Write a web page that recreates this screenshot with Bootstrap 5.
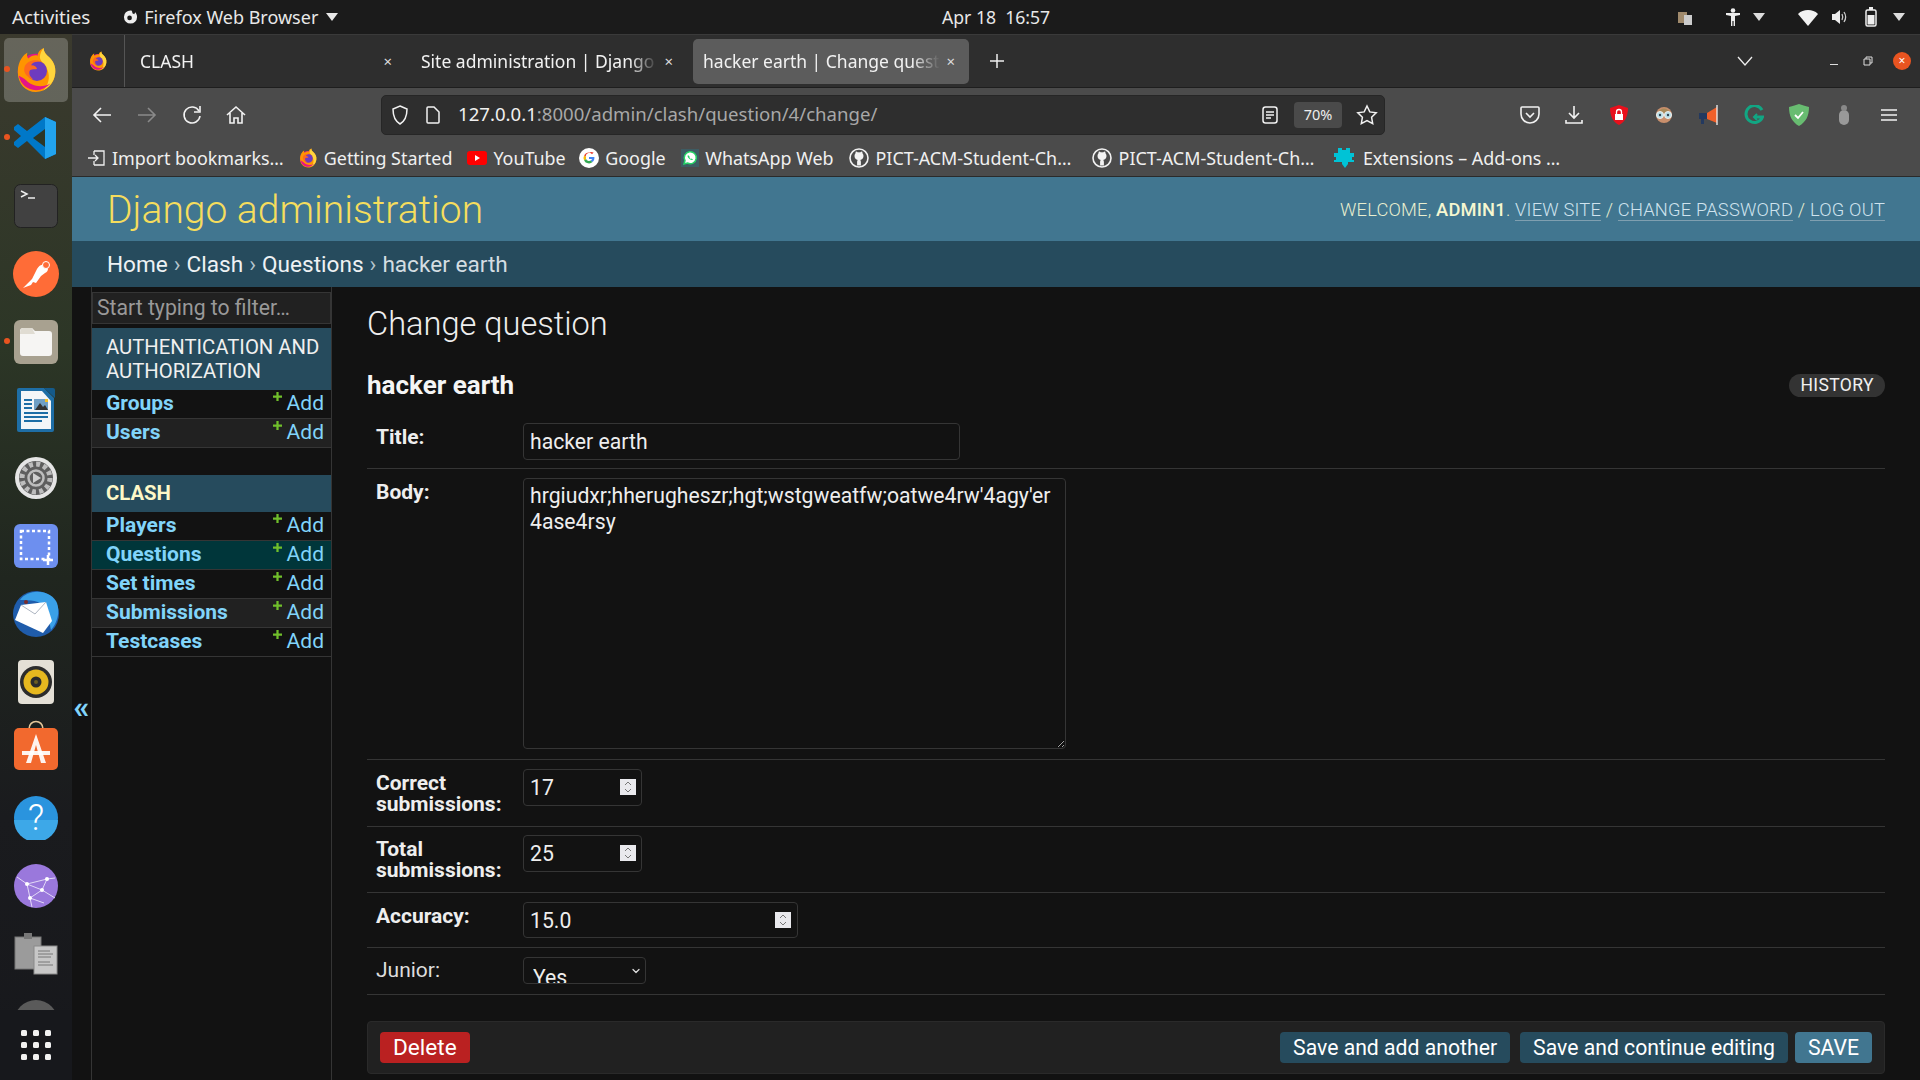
<!DOCTYPE html>
<html lang="en">
<head>
    <meta charset="UTF-8">
    <meta name="viewport" content="width=device-width, initial-scale=1.0">
    <title>hacker earth | Change question</title>
    <link href="https://cdn.jsdelivr.net/npm/bootstrap@5.3.0/dist/css/bootstrap.min.css" rel="stylesheet">
    <style>
        body { background: #121212; font-family: "Noto Sans", sans-serif; height: 1080px; overflow: hidden; }

        /* Ubuntu top bar */
        .top-bar { height: 34px; background: #1b1b1b; color: #e8e8e8; font-size: 18px; padding: 0 12px; flex: none; }
        .top-item { margin-right: 33px; font-size: 18.8px; }
        .top-clock { position: absolute; left: 942px; top: 4px; font-size: 17.6px; }
        .tray svg { display: block; }

        /* Dock */
        .dock { width: 72px; flex: none; background: linear-gradient(180deg, #3b3a2e 0%, #2c3626 30%, #20261f 52%, #1a1b1e 75%, #17181c 100%); position: relative; overflow: hidden; }
        .dock-item { height: 68px; width: 72px; flex: none; position: relative; padding-top: 3px; }
        .dock-first { background: rgba(255,255,255,.22); border-radius: 5px; width: 64px; height: 64px; position: absolute; left: 4px; top: 4px; }
        .dock-dot { position: absolute; left: 4px; top: 32px; width: 6px; height: 6px; border-radius: 50%; background: #e95420; z-index: 1; }
        .dock-grid { position: absolute; left: 0; right: 0; bottom: 0; height: 70px; background: #17181c; }

        /* Firefox */
        .tab-strip { height: 54px; background: #2e2e2e; color: #f2f2f2; font-size: 17.5px; border-top: 1px solid #3a3a3a; border-bottom: 1px solid #1e1e1e; flex: none; }
        .pin-tab { width: 53px; height: 52px; flex: none; border-right: 1px solid #555; }
        .ff-tab { height: 45px; flex: none; padding: 0 14px 0 15px; }
        .ff-tab.is-active { background: #5c5c5c; border-radius: 5px; padding-left: 10px; }
        .tab-label { white-space: nowrap; flex: 1; min-width: 0; -webkit-mask-image: linear-gradient(90deg, #000 88%, transparent 100%); mask-image: linear-gradient(90deg, #000 88%, transparent 100%); }
        .tab-x { font-size: 15px; color: #ddd; margin-left: 6px; }
        .tool-bar { height: 53px; background: #4b4b4b; flex: none; }
        .url-bar { width: 1004px; height: 40px; flex: none; background: #2e2e2e; border-radius: 5px; border: 1px solid #262626; margin-left: 135px; font-size: 18.6px; color: #a8a8a8; }
        .url-host { color: #f0f0f0; }
        .zoom-pill { background: #4a4a4a; border-radius: 4px; width: 48px; height: 26px; font-size: 14.5px; color: #eee; }
        .bookmarks { height: 36px; background: #4b4b4b; border-bottom: 1px solid #2a2a2a; color: #f0f0f0; font-size: 17.9px; padding-left: 16px; flex: none; }
        .mark-item { white-space: nowrap; flex: none; }

        /* Django admin */
        .dj-page { font-family: Roboto, sans-serif; color: #eee; background: #121212; }
        .dj-head { height: 64px; background: #417690; padding: 2px 35px 0; flex: none; }
        .dj-brand { font-size: 39px; font-weight: 300; color: #f5dd5d; line-height: 1; }
        .dj-tools { font-size: 18.3px; font-weight: 300; color: #e8eecf; text-transform: uppercase; letter-spacing: .2px; }
        .dj-tools a { color: #cfe3ee; text-decoration: none; border-bottom: 1px solid #7f9fb0; }
        .dj-tools strong { font-weight: 500; color: #f5f7d0; }
        .dj-crumbs { height: 46px; background: #264b5d; padding: 2px 35px 0; font-size: 22.6px; color: #d4dde2; flex: none; }
        .dj-crumbs .breadcrumb-item + .breadcrumb-item { padding-left: 6px; }
        .dj-crumbs .breadcrumb-item + .breadcrumb-item::before { content: "›"; color: #b5c5cd; padding-right: 6px; }
        .dj-crumbs a { color: #eef2f4; text-decoration: none; }
        .dj-crumbs .breadcrumb-item.active { color: #d4dde2; }
        .dj-toggle { width: 20px; flex: none; border-right: 1px solid #353535; color: #81d4fa; font-size: 32px; font-weight: 700; padding-top: 46px; }
        .dj-side { width: 240px; flex: none; border-right: 1px solid #353535; padding-top: 5px; }
        .side-filter { height: 32px; width: 239px; background: #212121; border: 1px solid #353535; color: #eee; font-size: 21.2px; padding: 0 4px 2px; border-radius: 0; margin-bottom: 4px; display: block; }
        .side-filter::placeholder { color: #999; opacity: 1; }
        .side-cap { background: #264b5d; color: #f0f0ef; font-size: 20.3px; line-height: 23.5px; padding: 8px 4px 7px 14px; }
        .side-cap.is-current { color: #fdf8c8; font-weight: 700; padding: 7px 14px 6px; }
        .side-row { height: 29px; padding: 0 7px 0 14px; border-bottom: 1px solid #353535; font-size: 21px; line-height: 27px; color: #81d4fa; }
        .side-row.is-alt { background: #212121; }
        .side-row.is-here { background: #00363a; }
        .side-name { font-weight: 700; }
        .side-add svg { vertical-align: 9px; margin-right: 5px; }
        .dj-main { padding: 0 35px 0 35px; flex: 1; min-width: 0; }
        .dj-title { font-size: 32.6px; font-weight: 300; color: #eee; line-height: 32px; margin: 21px 0 27px; }
        .dj-sub { height: 36px; margin-bottom: 10px; }
        .dj-sub h2 { font-size: 26px; font-weight: 700; color: #f5f5f5; margin: 1px 0 0; }
        .hist-pill { background: #333; border-radius: 13px; height: 23px; padding: 0 11px; font-size: 17.5px; color: #f0f0f0; letter-spacing: .4px; }
        .form-line { border-bottom: 1px solid #353535; padding: 9px 9px 11px; }
        .line-label { width: 147px; flex: none; font-size: 21px; line-height: 21px; font-weight: 700; color: #eee; padding-top: 4px; margin: 0; }
        .line-label.is-plain { font-weight: 400; color: #ddd; padding-top: 3px; }
        .dj-input { background-color: #121212 !important; color: #eee !important; border: 1px solid #353535; border-radius: 4px; font-size: 21.2px; line-height: 26px; padding: 4px 6px; box-shadow: none; }
        .in-title { width: 437px; height: 37px; }
        .in-body { width: 543px; height: 271px; display: block; }
        .in-count { width: 119px; height: 37px; }
        .in-acc { width: 275px; height: 36px; }
        .in-acc + .spin-box { right: 7px; }
        .in-junior { width: 123px; height: 27px; padding: 7px 0 0 9px; background-size: 10px 8px; background-position: right 4px top 9px; overflow: hidden; line-height: 26px; --bs-form-select-bg-img: url("data:image/svg+xml,%3csvg xmlns='http://www.w3.org/2000/svg' viewBox='0 0 16 16'%3e%3cpath fill='none' stroke='%23ddd' stroke-linecap='round' stroke-linejoin='round' stroke-width='2.5' d='m2 5 6 6 6-6'/%3e%3c/svg%3e"); }
        .spin-wrap { position: relative; }
        .spin-box { position: absolute; right: 6px; top: 10px; width: 16px; height: 16px; background: #e9e9ed; }
        .spin-box svg { display: block; }
        .submit-line { background: #212121; height: 53px; margin-top: 26px; padding: 0 12px; border: 1px solid #2a2a2a; border-radius: 4px; }
        .dj-btn { height: 31px; font-size: 21.2px; line-height: 1; padding: 0 13px; border: none; border-radius: 4px; color: #fff; background: #264b5d; }
        .dj-btn:hover { color: #fff; background: #264b5d; }
        .dj-btn.is-delete { background: #ba2121; font-size: 22.6px; padding-top: 2px; }
        .dj-btn.is-save { background: #417690; }
    </style>
</head>
<body class="d-flex flex-column">

<svg width="0" height="0" class="position-absolute">
    <defs>
        <symbol id="i-fox" viewBox="0 0 48 48">
            <circle cx="24" cy="26" r="19" fill="#e31587"/>
            <path d="M5 26C5 14 12 7 15 6c-1 3 0 5 1 6 3-3 7-4 10-3 0 0-1-5 6-8 0 3 1 5 4 8 6 5 9 11 8 19-1 10-9 19-20 19S5 38 5 26Z" fill="#ff9500"/>
            <path d="M32 1c0 3 1 5 4 8 6 5 9 11 8 19-1 8-6 14-12 17 5-6 7-13 4-21-2-6-7-8-8-13 0-4 2-8 4-10Z" fill="#ffd53d"/>
            <path d="M6 30c2 9 9 15 18 15 6 0 11-3 15-7-8 5-20 3-25-3-3-3-6-4-8-5Z" fill="#e31587"/>
            <circle cx="25" cy="25" r="10.5" fill="#6e3bbf"/>
            <path d="M12 21c2-6 10-9 17-6-5 0-9 1-10 4 4 0 6 2 6 4-3 1-8-1-8 4 0 3 3 6 5 7-6-1-12-7-10-13Z" fill="#ff6a1f"/>
        </symbol>
        <symbol id="i-hub" viewBox="0 0 20 20">
            <circle cx="10" cy="10" r="9" fill="none" stroke="#f2f2f2" stroke-width="1.6"/>
            <path d="M5.5 8c0-1 .3-2 1-2.700 0-.8.2-1.300.4-1.700.8 0 1.500.4 2.100.8.700-.1 1.300-.1 2 0 .6-.4 1.300-.8 2.100-.8.2.4.4.9.4 1.700.7.700 1 1.700 1 2.700 0 2.500-1.500 3.600-3.300 3.900.5.500.7 1.100.7 2v3.600H8.100V14c0-.9.200-1.500.7-2C7 11.600 5.500 10.500 5.500 8Z" fill="#f2f2f2"/>
        </symbol>
        <symbol id="i-add" viewBox="0 0 12 12"><path d="M6 0v12M0 6h12" stroke="#70bf2b" stroke-width="3"/></symbol>
        <symbol id="i-spin" viewBox="0 0 16 16"><path d="M5 6l3-3 3 3M5 10l3 3 3-3" fill="none" stroke="#777" stroke-width="1"/></symbol>
    </defs>
</svg>

<!-- Top bar -->
<div class="top-bar d-flex align-items-center position-relative">
    <span class="top-item">Activities</span>
    <span class="d-flex align-items-center">
        <svg width="15" height="16" viewBox="0 0 16 16" style="margin-right:6px"><path d="M8 1a7 7 0 1 0 7 7c0-2-1-4-2-5l-1 2-2-1c0-1 0-2-1-3Z" fill="#eee"/><circle cx="7" cy="9" r="2.500" fill="#1b1b1b"/></svg>
        <span>Firefox Web Browser</span>
        <svg width="12" height="8" viewBox="0 0 12 8" class="ms-2"><path d="M0 0h12L6 8Z" fill="#e8e8e8"/></svg>
    </span>
    <span class="top-clock">Apr 18&nbsp;&nbsp;16:57</span>
    <div class="tray d-flex align-items-center ms-auto">
        <svg width="14" height="16" viewBox="0 0 14 16" style="margin-right:33px"><rect x="0" y="3" width="9" height="11" fill="#a08a6c"/><rect x="6" y="6" width="8" height="10" fill="#ccc"/></svg>
        <svg width="16" height="18" viewBox="0 0 16 18" style="margin-right:12px"><circle cx="8" cy="2.500" r="2.300" fill="#eee"/><path d="M1 5h14v2l-5 1v10H8.600v-5H7.400v5H6V8L1 7Z" fill="#eee"/></svg>
        <svg width="12" height="8" viewBox="0 0 12 8" style="margin-right:33px"><path d="M0 0h12L6 8Z" fill="#ddd"/></svg>
        <svg width="20" height="17" viewBox="0 0 20 17" style="margin-right:13px"><path d="M0 5C3 2 6 1 10 1s7 1 10 4L10 17Z" fill="#f2f2f2"/></svg>
        <svg width="18" height="18" viewBox="0 0 18 18" style="margin-right:16px"><path d="M1 6h3l5-4v14l-5-4H1Z" fill="#eee"/><path d="M11 6c1 2 1 4 0 6M13 4c2 3 2 7 0 10" stroke="#ccc" stroke-width="1.300" fill="none"/></svg>
        <svg width="12" height="20" viewBox="0 0 12 20" style="margin-right:16px"><rect x="1" y="3" width="10" height="16" rx="1.500" fill="none" stroke="#eee" stroke-width="1.500"/><rect x="4" y="0" width="4" height="3" fill="#eee"/><rect x="2.500" y="8" width="7" height="9.500" fill="#eee"/></svg>
        <svg width="12" height="8" viewBox="0 0 12 8" style="margin-right:3px"><path d="M0 0h12L6 8Z" fill="#ddd"/></svg>
    </div>
</div>

<div class="d-flex flex-grow-1" style="min-height:0">

    <!-- Dock -->
    <aside class="dock d-flex flex-column">
        <div class="dock-item d-flex justify-content-center align-items-center">
            <span class="dock-first"></span><span class="dock-dot"></span>
            <svg class="position-relative" width="46" height="48"><use href="#i-fox"/></svg>
        </div>
        <div class="dock-item d-flex justify-content-center align-items-center">
            <span class="dock-dot"></span>
            <svg width="44" height="44" viewBox="0 0 44 44"><path d="M31 1 42 6v32l-11 5-18-18-9 7-4-3v-3l7-6-7-6v-3l4-3 9 7Z" fill="#0078c8"/><path d="M31 1 42 6v32l-11 5Z" fill="#22a3ee"/><path d="M31 13v18L19 22Z" fill="#2c3626"/></svg>
        </div>
        <div class="dock-item d-flex justify-content-center align-items-center">
            <svg width="44" height="44" viewBox="0 0 44 44"><rect x=".5" y=".5" width="43" height="43" rx="6" fill="#414141" stroke="#222"/><path d="M7 7l6 3-6 3" fill="none" stroke="#eee" stroke-width="1.500"/><path d="M14 14h7" stroke="#eee" stroke-width="1.500"/></svg>
        </div>
        <div class="dock-item d-flex justify-content-center align-items-center">
            <svg width="46" height="46" viewBox="0 0 46 46"><circle cx="23" cy="23" r="23" fill="#ff6c37"/><path d="M10 37l9-9 5-10c2-4 5-5 8-4l3 3c0 3-1 4-3 5l-4 3-5 7-3-1-2 3-8 3Z" fill="#fff"/><circle cx="33" cy="14" r="3.500" fill="#ff6c37" stroke="#fff"/></svg>
        </div>
        <div class="dock-item d-flex justify-content-center align-items-center">
            <span class="dock-dot"></span>
            <svg width="44" height="44" viewBox="0 0 44 44"><rect width="44" height="44" rx="6" fill="#a8a190"/><path d="M6 11q0-3 3-3h9l3 3h14q3 0 3 3v19q0 3-3 3H9q-3 0-3-3Z" fill="#f6f5f3"/><path d="M6 14q0-6 3-6h9l3 6Z" fill="#e0dcd2"/></svg>
        </div>
        <div class="dock-item d-flex justify-content-center align-items-center">
            <svg width="38" height="44" viewBox="0 0 38 44"><path d="M2 0h25l10 10v32q0 2-2 2H2q-2 0-2-2V2q0-2 2-2Z" fill="#1e6ea6"/><path d="M4 3h21l9 10v28H4Z" fill="#f4f6f8"/><path d="M27 0h9q2 0 2 2v8Z" fill="#155a8a"/><path d="M7 12h8M7 16h8M7 20h8M7 25h24M7 29h24M7 33h18" stroke="#1e6ea6" stroke-width="2"/><rect x="17" y="11" width="14" height="11" fill="#6f9fc5"/><path d="M18 22l5-7 3 4 2-2 3 5Z" fill="#333"/><rect x="28" y="11" width="3" height="3" fill="#f3c02a"/></svg>
        </div>
        <div class="dock-item d-flex justify-content-center align-items-center">
            <svg width="44" height="44" viewBox="0 0 44 44"><circle cx="22" cy="22" r="21" fill="#e5e5e5"/><circle cx="22" cy="22" r="17" fill="#5e5e5e"/><circle cx="22" cy="22" r="14" fill="none" stroke="#bdbdbd" stroke-width="5" stroke-dasharray="4 3.300"/><circle cx="22" cy="22" r="7.500" fill="#5e5e5e" stroke="#bdbdbd" stroke-width="2.500"/><path d="M19 17l8 5-8 5Z" fill="#cfcfcf"/></svg>
        </div>
        <div class="dock-item d-flex justify-content-center align-items-center">
            <svg width="44" height="44" viewBox="0 0 44 44"><rect width="44" height="44" rx="6" fill="#6d8fef"/><rect x="7" y="7" width="28" height="28" fill="none" stroke="#fff" stroke-width="2.500" stroke-dasharray="3 2.500"/><path d="M34 31v10M29 36h10" stroke="#fff" stroke-width="2.500"/></svg>
        </div>
        <div class="dock-item d-flex justify-content-center align-items-center">
            <svg width="48" height="46" viewBox="0 0 48 46"><circle cx="24" cy="23" r="23" fill="#1f5cab"/><path d="M8 9C16-2 36-2 44 10c4 7 3 20-5 29-2-7-1-15-5-22C28 9 18 9 8 9Z" fill="#3aa0e8"/><path d="M9 14 34 11l6 19-9 12-28-13Z" fill="#fff"/><path d="M9 14l14 9 11-12" fill="none" stroke="#aeb6c2" stroke-width="1"/><circle cx="14" cy="11" r="2" fill="#7a2c2c"/></svg>
        </div>
        <div class="dock-item d-flex justify-content-center align-items-center">
            <svg width="38" height="44" viewBox="0 0 38 44"><rect width="36" height="44" rx="4" x="1" fill="#e4e0d6"/><circle cx="19" cy="22" r="16" fill="#2c2c2c"/><circle cx="19" cy="22" r="12.500" fill="#e6b81f"/><circle cx="19" cy="22" r="5.500" fill="#2b2b2b"/><circle cx="19" cy="22" r="2" fill="#6b5d22"/></svg>
        </div>
        <div class="dock-item d-flex justify-content-center align-items-center">
            <svg width="44" height="50" viewBox="0 0 44 50" style="margin-bottom:10px"><path d="M15 9c0-10 14-10 14 0" fill="none" stroke="#e6c79a" stroke-width="1.600"/><rect y="8" width="44" height="42" rx="5" fill="#f2692e"/><path d="M22 14 12 43h5l5-18 5 18h5Z" fill="#fff" opacity=".92"/><path d="M8 31h28v4H8Z" fill="#fff" opacity=".92"/></svg>
        </div>
        <div class="dock-item d-flex justify-content-center align-items-center position-relative">
            <svg width="44" height="44" viewBox="0 0 44 44"><circle cx="22" cy="22" r="22" fill="#2a94de"/><path d="M0 24a22 22 0 0 0 44 0Z" fill="#3da8e8"/></svg>
            <span class="position-absolute text-white" style="font-family:Roboto,sans-serif;font-weight:300;font-size:36px;line-height:44px">?</span>
        </div>
        <div class="dock-item d-flex justify-content-center align-items-center">
            <svg width="44" height="44" viewBox="0 0 44 44"><circle cx="22" cy="22" r="22" fill="#9a78dc"/><path d="M3 13l10 7 20-5 8-1M13 20l3 14 2 9M33 15l-5 11-12 8M13 20l15 6 13 8M16 34l14 5" fill="none" stroke="#e2d9f7" stroke-width="1"/><circle cx="13" cy="20" r="2" fill="#fff"/><circle cx="33" cy="15" r="2" fill="#fff"/><circle cx="28" cy="26" r="2" fill="#fff"/><circle cx="16" cy="34" r="2" fill="#fff"/></svg>
        </div>
        <div class="dock-item d-flex justify-content-center align-items-center">
            <svg width="44" height="44" viewBox="0 0 44 44"><rect x="1" y="5" width="26" height="32" fill="#9b9b9b" stroke="#777"/><rect x="10" y="1" width="8" height="6" fill="#777"/><rect x="20" y="14" width="23" height="28" fill="#c7c7c7" stroke="#8a8a8a"/><path d="M24 19h12M24 22h15M24 25h13M24 30h12M24 33h15" stroke="#777"/></svg>
        </div>
        <div class="dock-item d-flex justify-content-center align-items-center">
            <svg width="44" height="44" viewBox="0 0 44 44"><circle cx="22" cy="22" r="22" fill="#5a5a5a"/></svg>
        </div>
        <div class="dock-grid d-flex align-items-center justify-content-center">
            <svg width="30" height="30" viewBox="0 0 30 30" fill="#f2f2f2"><rect width="6" height="6" rx="1.500"/><rect x="12" width="6" height="6" rx="1.500"/><rect x="24" width="6" height="6" rx="1.500"/><rect y="12" width="6" height="6" rx="1.500"/><rect x="12" y="12" width="6" height="6" rx="1.500"/><rect x="24" y="12" width="6" height="6" rx="1.500"/><rect y="24" width="6" height="6" rx="1.500"/><rect x="12" y="24" width="6" height="6" rx="1.500"/><rect x="24" y="24" width="6" height="6" rx="1.500"/></svg>
        </div>
    </aside>

    <!-- Browser window -->
    <div class="d-flex flex-column flex-grow-1" style="min-width:0">
        <div class="tab-strip d-flex align-items-center">
            <div class="pin-tab d-flex align-items-center justify-content-center">
                <svg width="20" height="20"><use href="#i-fox"/></svg>
            </div>
            <div class="ff-tab d-flex align-items-center" style="width:281px"><span class="tab-label">CLASH</span><span class="tab-x">×</span></div>
            <div class="ff-tab d-flex align-items-center" style="width:281px"><span class="tab-label">Site administration | Django s</span><span class="tab-x">×</span></div>
            <div class="ff-tab is-active d-flex align-items-center" style="width:276px;margin-left:6px"><span class="tab-label">hacker earth | Change questi</span><span class="tab-x">×</span></div>
            <svg width="16" height="16" viewBox="0 0 16 16" style="margin-left:20px;flex:none"><path d="M8 1v14M1 8h14" stroke="#eee" stroke-width="1.500"/></svg>
            <svg width="16" height="10" viewBox="0 0 16 10" style="margin-left:732px;flex:none"><path d="M1 1l7 8 7-8" fill="none" stroke="#eee" stroke-width="1.300"/></svg>
            <span style="width:8px;height:1px;background:#ddd;margin-left:77px;margin-top:6px;flex:none"></span>
            <svg width="10" height="10" viewBox="0 0 10 10" style="margin-left:25px;flex:none"><path d="M3 3V1h6v6H7M1 3h6v6H1Z" fill="none" stroke="#ddd"/></svg>
            <span class="d-flex align-items-center justify-content-center text-white" style="width:18px;height:18px;border-radius:50%;background:#e95420;margin-left:20px;font-size:12px;flex:none">×</span>
        </div>

        <div class="tool-bar d-flex align-items-center">
            <svg width="20" height="18" viewBox="0 0 20 18" style="margin-left:20px"><path d="M19 9H2M9 2 2 9l7 7" fill="none" stroke="#f2f2f2" stroke-width="1.600"/></svg>
            <svg width="20" height="18" viewBox="0 0 20 18" style="margin-left:25px"><path d="M1 9h17M11 2l7 7-7 7" fill="none" stroke="#8a8a8a" stroke-width="1.600"/></svg>
            <svg width="20" height="20" viewBox="0 0 20 20" style="margin-left:25px"><path d="M17 6a8 8 0 1 0 1 5" fill="none" stroke="#f2f2f2" stroke-width="1.600"/><path d="M18 1v6h-6" fill="none" stroke="#f2f2f2" stroke-width="1.600"/></svg>
            <svg width="20" height="20" viewBox="0 0 20 20" style="margin-left:24px"><path d="M1 10l9-8 9 8M4 8v10h4v-5h4v5h4V8" fill="none" stroke="#f2f2f2" stroke-width="1.600"/></svg>
            <div class="url-bar d-flex align-items-center">
                <svg width="18" height="20" viewBox="0 0 18 20" style="margin-left:9px"><path d="M9 1l7 3c0 7-2 12-7 15C4 16 2 11 2 4Z" fill="none" stroke="#f2f2f2" stroke-width="1.500"/></svg>
                <svg width="14" height="18" viewBox="0 0 14 18" style="margin-left:17px"><path d="M1 2q0-1 1-1h6l5 5v10q0 1-1 1H2q-1 0-1-1Z" fill="none" stroke="#f2f2f2" stroke-width="1.500"/></svg>
                <span style="margin-left:18px;padding-bottom:2px"><span class="url-host">127.0.0.1</span>:8000/admin/clash/question/4/change/</span>
                <svg class="ms-auto" width="16" height="18" viewBox="0 0 16 18"><rect x="1" y="1" width="14" height="16" rx="2.500" fill="none" stroke="#f2f2f2" stroke-width="1.500"/><path d="M4 6h8M4 9h8M4 12h5" stroke="#f2f2f2" stroke-width="1.300"/></svg>
                <span class="zoom-pill d-flex align-items-center justify-content-center" style="margin-left:16px">70%</span>
                <svg width="22" height="22" viewBox="0 0 22 22" style="margin:0 6px 0 14px"><path d="M11 2l2.800 5.900 6.400.9-4.600 4.500 1.100 6.400-5.700-3-5.700 3 1.100-6.400L1.800 8.800l6.400-.9Z" fill="none" stroke="#f2f2f2" stroke-width="1.500"/></svg>
            </div>
            <svg width="20" height="18" viewBox="0 0 20 18" style="margin-left:135px"><path d="M2 1h16q1 0 1 1v6a9 9 0 0 1-18 0V2q0-1 1-1Z" fill="none" stroke="#f2f2f2" stroke-width="1.600"/><path d="M6 7l4 4 4-4" fill="none" stroke="#f2f2f2" stroke-width="1.600"/></svg>
            <svg width="18" height="20" viewBox="0 0 18 20" style="margin-left:25px"><path d="M9 1v12M4 8l5 5 5-5M1 15v3h16v-3" fill="none" stroke="#f2f2f2" stroke-width="1.600"/></svg>
            <svg width="18" height="20" viewBox="0 0 18 20" style="margin-left:27px"><path d="M9 0l9 3c0 8-3 14-9 17C3 17 0 11 0 3Z" fill="#e8101c"/><rect x="5" y="9" width="8" height="6" fill="#fff"/><path d="M6.500 9V7a2.500 2.500 0 0 1 5 0v2" fill="none" stroke="#fff" stroke-width="1.300"/></svg>
            <svg width="20" height="20" viewBox="0 0 20 20" style="margin-left:26px"><circle cx="10" cy="10" r="8" fill="#c98f6c"/><path d="M3 8q7-9 14 0Z" fill="#a88a5a"/><circle cx="6" cy="10" r="3.500" fill="#b9dfe6" stroke="#eee"/><circle cx="14" cy="10" r="3.500" fill="#b9dfe6" stroke="#eee"/><circle cx="6" cy="10" r="1.200" fill="#345"/><circle cx="14" cy="10" r="1.200" fill="#345"/></svg>
            <svg width="20" height="20" viewBox="0 0 20 20" style="margin-left:25px"><path d="M0 8h8v6H5v5H2v-5H0Z" fill="#23395f"/><path d="M8 8l10-6v16L8 14Z" fill="#f0602a"/><path d="M18 0v20" stroke="#f2f2f2" stroke-width="1.300"/></svg>
            <svg width="20" height="20" viewBox="0 0 20 20" style="margin-left:25px"><path d="M18 5A8.500 8.500 0 1 0 18.500 12H11" fill="none" stroke="#11a683" stroke-width="3"/><path d="M13 9l-3 3 3 3" fill="none" stroke="#11a683" stroke-width="2"/></svg>
            <svg width="20" height="22" viewBox="0 0 20 22" style="margin-left:25px"><path d="M10 0c3 1 6 2 10 3 0 9-3 15-10 19C3 18 0 12 0 3c4-1 7-2 10-3Z" fill="#68bc71"/><path d="M6 11l3 3 5-6" fill="none" stroke="#fff" stroke-width="1.800"/></svg>
            <svg width="12" height="20" viewBox="0 0 12 20" style="margin-left:29px"><rect x="1" y="5" width="10" height="15" rx="5" fill="#999"/><rect x="3" y="0" width="6" height="6" rx="3" fill="#888"/></svg>
            <svg width="16" height="12" viewBox="0 0 16 12" style="margin-left:31px"><path d="M0 1h16M0 6h16M0 11h16" stroke="#f2f2f2" stroke-width="1.500"/></svg>
        </div>

        <div class="bookmarks d-flex align-items-center">
            <span class="mark-item d-flex align-items-center">
                <svg width="17" height="16" viewBox="0 0 17 16" style="margin-right:7px"><path d="M6 1h10v14H6M6 5V1M6 15v-4M0 8h10M7 5l3 3-3 3" fill="none" stroke="#f0f0f0" stroke-width="1.300"/></svg>Import bookmarks…</span>
            <span class="mark-item d-flex align-items-center" style="margin-left:14px"><svg width="20" height="20" style="margin-right:6px"><use href="#i-fox"/></svg>Getting Started</span>
            <span class="mark-item d-flex align-items-center" style="margin-left:15px"><svg width="20" height="14" viewBox="0 0 20 14" style="margin-right:6px"><rect width="20" height="14" rx="3" fill="#f00"/><path d="M8 4l5 3-5 3Z" fill="#fff"/></svg>YouTube</span>
            <span class="mark-item d-flex align-items-center" style="margin-left:13.5px"><svg width="20" height="20" viewBox="0 0 20 20" style="margin-right:6px"><circle cx="10" cy="10" r="10" fill="#fff"/><path d="M10 4.500a5.500 5.500 0 0 0-4.900 3l2 1.600A3.300 3.300 0 0 1 13 6.300l1.700-1.700A5.500 5.500 0 0 0 10 4.500Z" fill="#ea4335"/><path d="M5.100 7.500a5.500 5.500 0 0 0 0 5l2-1.600a3.300 3.300 0 0 1 0-1.800Z" fill="#fbbc05"/><path d="M5.100 12.500a5.500 5.500 0 0 0 8.500 1.600l-1.900-1.500a3.300 3.300 0 0 1-4.600-1.700Z" fill="#34a853"/><path d="M15.400 9H10v2.100h3.100c-.2.600-.7 1.100-1.400 1.500l1.900 1.500c1.300-1.200 2-3 1.800-5.100Z" fill="#4285f4"/></svg>Google</span>
            <span class="mark-item d-flex align-items-center" style="margin-left:15.7px"><svg width="18" height="18" viewBox="0 0 18 18" style="margin-right:6px"><rect width="18" height="18" fill="#3d5c63"/><path d="M3 15l1-3.500a6 6 0 1 1 2.500 2.500Z" fill="#fff" stroke="#25d366" stroke-width="1.500"/><path d="M7 6c-1 1 0 3 1.500 4S11 11.500 12 10.500l-1.500-1-.7.600c-.6-.3-1.100-.9-1.400-1.500l.5-.7Z" fill="#25d366"/></svg>WhatsApp Web</span>
            <span class="mark-item d-flex align-items-center" style="margin-left:15px"><svg width="20" height="20" style="margin-right:7px"><use href="#i-hub"/></svg>PICT-ACM-Student-Ch…</span>
            <span class="mark-item d-flex align-items-center" style="margin-left:20.3px"><svg width="20" height="20" style="margin-right:7px"><use href="#i-hub"/></svg>PICT-ACM-Student-Ch…</span>
            <span class="mark-item d-flex align-items-center" style="margin-left:19.5px"><svg width="20" height="20" viewBox="0 0 20 20" style="margin-right:9px"><path d="M4 0h4v2h4V0h4v5h4v4h-2v3h2v2h-6v2l-3 4-3-4v-2H0v-2h2V9H0V5h4Z" fill="#00c3d6"/></svg>Extensions – Add-ons …</span>
        </div>

        <!-- Admin page -->
        <div class="dj-page flex-grow-1 d-flex flex-column" style="min-height:0">
            <header class="dj-head d-flex align-items-center justify-content-between">
                <div class="dj-brand">Django administration</div>
                <div class="dj-tools">Welcome, <strong>admin1</strong>. <a href="#">View site</a> / <a href="#">Change password</a> / <a href="#">Log out</a></div>
            </header>
            <nav class="dj-crumbs d-flex align-items-center">
                <ol class="breadcrumb mb-0">
                    <li class="breadcrumb-item"><a href="#">Home</a></li>
                    <li class="breadcrumb-item"><a href="#">Clash</a></li>
                    <li class="breadcrumb-item"><a href="#">Questions</a></li>
                    <li class="breadcrumb-item active">hacker earth</li>
                </ol>
            </nav>
            <div class="d-flex flex-grow-1" style="min-height:0">
                <div class="dj-toggle d-flex justify-content-center align-items-center"><span>«</span></div>
                <div class="dj-side">
                    <input class="side-filter form-control" type="text" placeholder="Start typing to filter…">
                    <div class="side-cap">AUTHENTICATION AND AUTHORIZATION</div>
                    <div class="side-row d-flex justify-content-between"><span class="side-name">Groups</span><span class="side-add"><svg width="9" height="9"><use href="#i-add"/></svg>Add</span></div>
                    <div class="side-row is-alt d-flex justify-content-between"><span class="side-name">Users</span><span class="side-add"><svg width="9" height="9"><use href="#i-add"/></svg>Add</span></div>
                    <div class="side-cap is-current" style="margin-top:27px">CLASH</div>
                    <div class="side-row d-flex justify-content-between"><span class="side-name">Players</span><span class="side-add"><svg width="9" height="9"><use href="#i-add"/></svg>Add</span></div>
                    <div class="side-row is-here d-flex justify-content-between"><span class="side-name">Questions</span><span class="side-add"><svg width="9" height="9"><use href="#i-add"/></svg>Add</span></div>
                    <div class="side-row d-flex justify-content-between"><span class="side-name">Set times</span><span class="side-add"><svg width="9" height="9"><use href="#i-add"/></svg>Add</span></div>
                    <div class="side-row is-alt d-flex justify-content-between"><span class="side-name">Submissions</span><span class="side-add"><svg width="9" height="9"><use href="#i-add"/></svg>Add</span></div>
                    <div class="side-row d-flex justify-content-between"><span class="side-name">Testcases</span><span class="side-add"><svg width="9" height="9"><use href="#i-add"/></svg>Add</span></div>
                </div>
                <main class="dj-main">
                    <h1 class="dj-title">Change question</h1>
                    <div class="dj-sub d-flex justify-content-between align-items-center">
                        <h2>hacker earth</h2>
                        <span class="hist-pill d-flex align-items-center">HISTORY</span>
                    </div>
                    <div class="form-line d-flex" style="padding-top:10px;padding-bottom:8px">
                        <label class="line-label" for="f-title">Title:</label>
                        <input id="f-title" class="form-control dj-input in-title" value="hacker earth">
                    </div>
                    <div class="form-line d-flex" style="padding-bottom:10px">
                        <label class="line-label" for="f-body">Body:</label>
                        <textarea id="f-body" class="form-control dj-input in-body">hrgiudxr;hherugheszr;hgt;wstgweatfw;oatwe4rw'4agy'er
4ase4rsy</textarea>
                    </div>
                    <div class="form-line d-flex">
                        <label class="line-label" for="f-correct">Correct submissions:</label>
                        <div class="spin-wrap"><input id="f-correct" class="form-control dj-input in-count" value="17"><span class="spin-box"><svg width="16" height="16"><use href="#i-spin"/></svg></span></div>
                    </div>
                    <div class="form-line d-flex" style="padding-top:8px">
                        <label class="line-label" for="f-total">Total submissions:</label>
                        <div class="spin-wrap"><input id="f-total" class="form-control dj-input in-count" value="25"><span class="spin-box"><svg width="16" height="16"><use href="#i-spin"/></svg></span></div>
                    </div>
                    <div class="form-line d-flex" style="padding-bottom:9px">
                        <label class="line-label" for="f-acc">Accuracy:</label>
                        <div class="spin-wrap"><input id="f-acc" class="form-control dj-input in-acc" value="15.0"><span class="spin-box"><svg width="16" height="16"><use href="#i-spin"/></svg></span></div>
                    </div>
                    <div class="form-line d-flex" style="padding-bottom:10px">
                        <label class="line-label is-plain" for="f-junior">Junior:</label>
                        <select id="f-junior" class="form-select dj-input in-junior"><option>Yes</option><option>No</option></select>
                    </div>
                    <div class="submit-line d-flex align-items-center">
                        <button class="btn dj-btn is-delete">Delete</button>
                        <button class="btn dj-btn ms-auto">Save and add another</button>
                        <button class="btn dj-btn" style="margin-left:10px">Save and continue editing</button>
                        <button class="btn dj-btn is-save" style="margin-left:7px">SAVE</button>
                    </div>
                </main>
            </div>
        </div>
    </div>
</div>

<script src="https://cdn.jsdelivr.net/npm/bootstrap@5.3.0/dist/js/bootstrap.bundle.min.js"></script>
</body>
</html>
